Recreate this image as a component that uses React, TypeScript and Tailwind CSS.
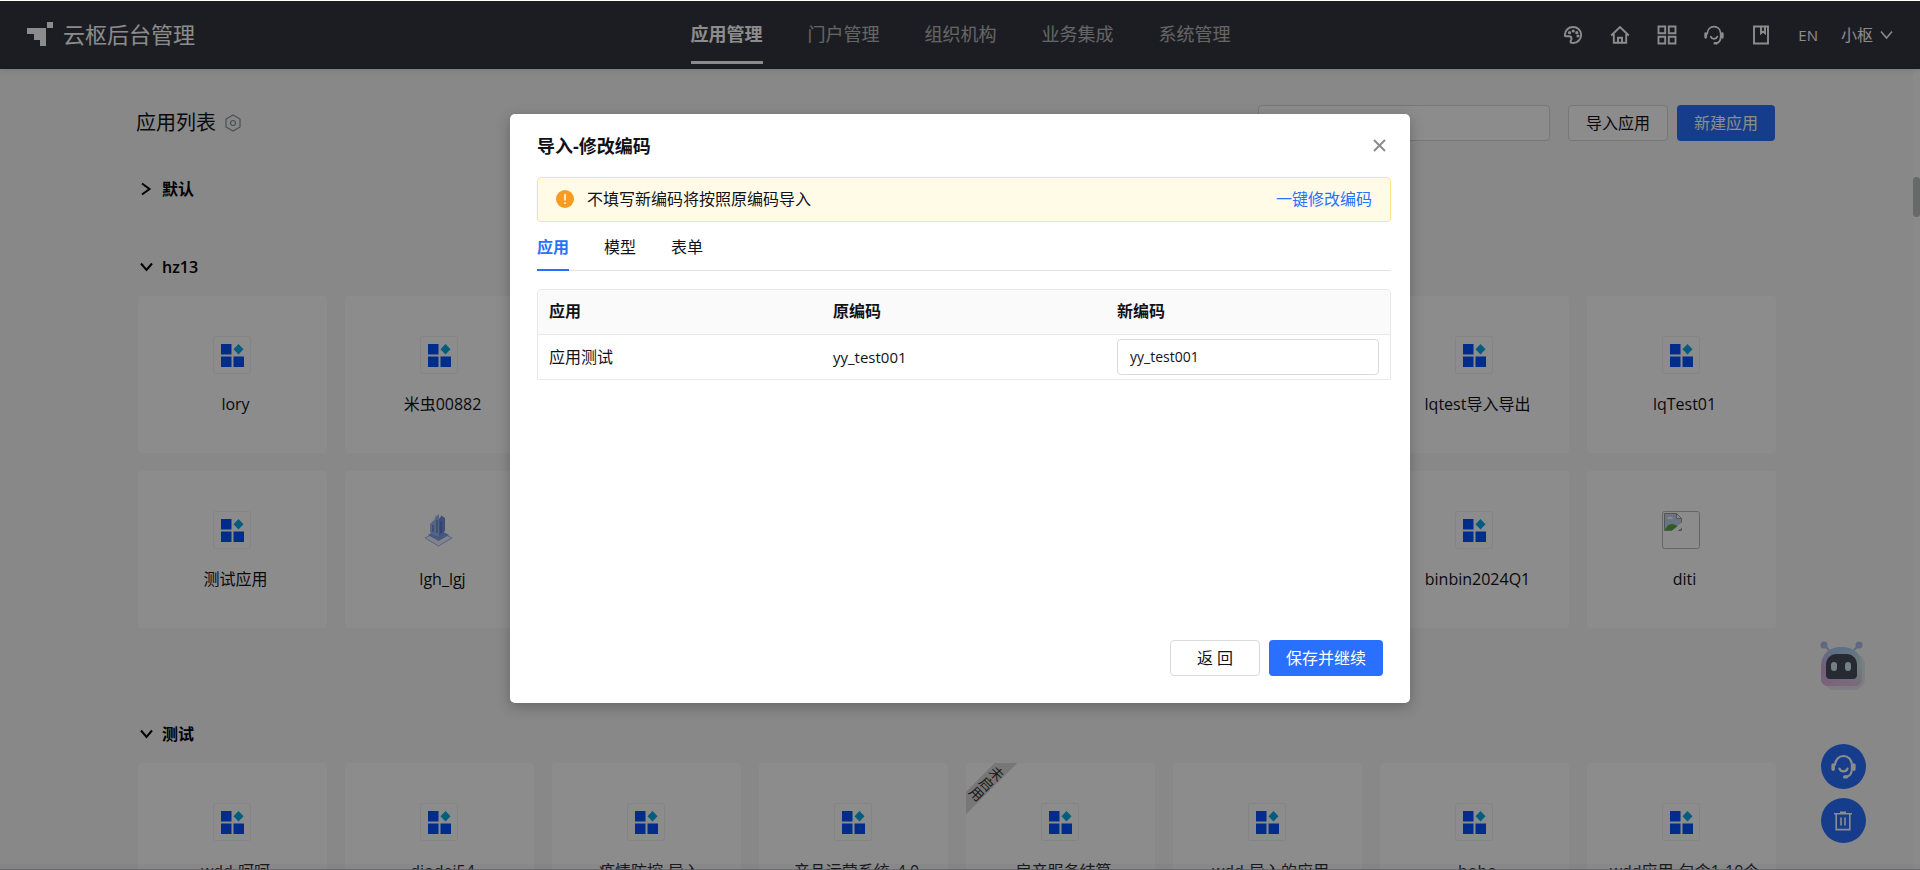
import React, { useState } from 'react';

interface AppItem {
  name: string;
  icon?: 'default' | 'tower' | 'broken';
  disabled?: boolean;
}

interface AppGroup {
  name: string;
  open: boolean;
  apps: AppItem[];
}

const NAV_ITEMS = ['应用管理', '门户管理', '组织机构', '业务集成', '系统管理'];

const TABS = ['应用', '模型', '表单'];

const GROUPS: AppGroup[] = [
  { name: '默认', open: false, apps: [] },
  {
    name: 'hz13',
    open: true,
    apps: [
      { name: 'lory' },
      { name: '米虫00882' },
      { name: '流程测试' },
      { name: '表单测试' },
      { name: '门户测试' },
      { name: '集成测试' },
      { name: 'lqtest导入导出' },
      { name: 'lqTest01' },
      { name: '测试应用' },
      { name: 'lgh_lgj', icon: 'tower' },
      { name: '模型测试' },
      { name: '报表测试' },
      { name: '权限测试' },
      { name: '数据测试' },
      { name: 'binbin2024Q1' },
      { name: 'diti', icon: 'broken' },
    ],
  },
  {
    name: '测试',
    open: true,
    apps: [
      { name: 'wdd-呵呵' },
      { name: 'diodei54' },
      { name: '疫情防控-导入' },
      { name: '产品运营系统_4.0' },
      { name: '房产服务结算', disabled: true },
      { name: 'wdd-导入的应用' },
      { name: 'bobo' },
      { name: 'wdd应用-包含1-10个' },
    ],
  },
];

const Logo = () => (
  <svg width="26" height="24" viewBox="0 0 26 24" fill="currentColor">
    <path d="M0 6h19v18h-6v-6H7v-6H0z" />
    <path d="M20 0h6v6h-6z" />
  </svg>
);

const PaletteIcon = () => (
  <svg width="20" height="20" viewBox="0 0 20 20" fill="none" stroke="currentColor" strokeWidth="1.9">
    <path d="M1.8 10C2 5.200 5.500 2 10 2s8.200 3.300 8.200 7.700S14.600 18 10.500 18c-2 0-3-.5-3-1.300 0-.9 1-1.500 1-2.900 0-1.600-1-2.500-2.500-2.500H2.600c-.5 0-.8-.5-.8-1.300z" />
    <g fill="currentColor" stroke="none">
      <circle cx="6.500" cy="7.700" r="1.600" />
      <circle cx="10.200" cy="6" r="1.600" />
      <circle cx="13.800" cy="7.700" r="1.600" />
      <circle cx="15" cy="11" r="1.600" />
    </g>
  </svg>
);

const HomeIcon = () => (
  <svg width="20" height="20" viewBox="0 0 20 20" fill="none" stroke="currentColor" strokeWidth="1.9">
    <path d="M1.200 10.500L10 2l8.800 8.500M3.800 9v8.700h12.400V9M8 17.500v-4.700h4v4.700" />
  </svg>
);

const GridIcon = () => (
  <svg width="20" height="20" viewBox="0 0 20 20" fill="none" stroke="currentColor" strokeWidth="1.9">
    <path d="M1.500 1.500h6.700v6.700H1.500zM11.800 1.500h6.700v6.700h-6.700zM1.500 11.800h6.700v6.700H1.500zM11.800 11.800h6.700v6.700h-6.700z" />
  </svg>
);

const HeadsetIcon = ({ size }: { size: number }) => (
  <svg width={size} height={size} viewBox="0 0 20 20" fill="none" stroke="currentColor" strokeWidth="1.700" strokeLinecap="round">
    <path d="M3.300 8.600C3.500 4.500 6.200 1.600 10 1.600s6.500 2.900 6.700 7v3.200c0 3.600-1.700 5.900-4.500 6.500" />
    <path d="M1.700 8.700v3.600M18.300 8.700v3.600" strokeWidth="2.800" />
    <path d="M10.800 18.300h1.600" strokeWidth="2.400" />
    <path d="M6.700 11.600c.6 1.500 1.800 2.300 3.300 2.300s2.700-.8 3.300-2.300" />
  </svg>
);

const BookIcon = () => (
  <svg width="20" height="20" viewBox="0 0 20 20" fill="none" stroke="currentColor" strokeWidth="1.9">
    <path d="M3 1.500h14v17H3zM10 2v6.200l2-1.600 2 1.600V2" />
  </svg>
);

const Chevron = ({ open, strokeWidth = 1.5 }: { open: boolean; strokeWidth?: number }) => (
  <svg width="14" height="14" viewBox="0 0 14 14" fill="none" stroke="currentColor" strokeWidth={strokeWidth}>
    <path d={open ? 'M1 3.500L6.500 10 12 3.500' : 'M2 1.500L9.500 7 2 12.500'} />
  </svg>
);

const TrashIcon = () => (
  <svg width="20" height="20" viewBox="0 0 20 20" fill="none" stroke="currentColor" strokeWidth="1.600">
    <path d="M1 2.700h18M7 1.300h6M3.200 3v15.600h13.600V3M8 6.500v8M12 6.500v8" />
  </svg>
);

const RobotIcon = () => (
  <svg width="46" height="50" viewBox="0 0 46 50">
    <defs>
      <linearGradient id="shell" x1="0" y1="0.700" x2="1" y2="0.400">
        <stop offset="0" stopColor="#d9a3dc" />
        <stop offset="0.500" stopColor="#c4cdea" />
        <stop offset="1" stopColor="#d3e8dc" />
      </linearGradient>
      <linearGradient id="shellTop" x1="0" y1="0" x2="0" y2="1">
        <stop offset="0" stopColor="#a9cdf2" />
        <stop offset="0.500" stopColor="#a9cdf2" stopOpacity="0" />
        <stop offset="1" stopColor="#efb9d6" stopOpacity="0.800" />
      </linearGradient>
    </defs>
    <rect x="3" y="12" width="42" height="37" rx="12" fill="#b9bfe0" opacity="0.300" />
    <g stroke="#a9c0e6" strokeWidth="2">
      <path d="M4 4l5 5M39 4l-5 5" />
    </g>
    <circle cx="4" cy="4" r="3.500" fill="#a9c0e6" />
    <circle cx="39" cy="4" r="3.500" fill="#a9c0e6" />
    <path d="M1 25C1 13 10 6 21.500 6S42 13 42 25v13c0 4-3 7-7 7H8c-4 0-7-3-7-7z" fill="url(#shell)" />
    <path d="M1 25C1 13 10 6 21.500 6S42 13 42 25v13c0 4-3 7-7 7H8c-4 0-7-3-7-7z" fill="url(#shellTop)" />
    <path d="M6 24c0-7 5-11 10-11h11c5 0 10 4 10 11v10c0 2-1 4-4 4H10c-3 0-4-2-4-4z" fill="#484b5e" />
    <rect x="11" y="21" width="6" height="9" rx="3" fill="#d3ecf0" />
    <rect x="25" y="21" width="6" height="9" rx="3" fill="#d3ecf0" />
  </svg>
);

const AppIcon = ({ type = 'default' }: { type?: AppItem['icon'] }) => {
  if (type === 'tower') {
    return (
      <svg width="38" height="38" viewBox="0 0 38 38">
        <path d="M5 27l13.500-7L32 27l-13.500 8z" fill="#eef1fa" stroke="#9db8f0" strokeWidth="1" />
        <path d="M8 24l10.500-6L29 24l-10.500 6z" fill="#7ea0ec" />
        <path d="M10 13l5-5v17l-5-4zM15 6l4-3v23l-4-2z" fill="#9db8ee" />
        <path d="M19 8l3-4v19l-3 2zM22 5l3 2v13l-3 2z" fill="#6d8fdc" />
        <path d="M13 14v7M17 9v13M21 10v12" stroke="#4a6cc4" strokeWidth="1" />
      </svg>
    );
  }
  if (type === 'broken') {
    return (
      <svg width="38" height="38" viewBox="0 0 38 38">
        <rect x="0.500" y="0.500" width="37" height="37" rx="2" fill="none" stroke="#b8b8b8" />
        <path d="M2.500 2.500h12l5 5v12h-17z" fill="#c3d4f2" stroke="#9a9a9a" />
        <path d="M14.500 2.500v5h5z" fill="#fff" stroke="#9a9a9a" />
        <path d="M5 8c1-3 5-3 6 0z" fill="#fff" />
        <path d="M3 19c3-8 10-8 16 0z" fill="#57a83a" />
        <path d="M9 20.500L20.500 11v5l-6 5z" fill="#fff" />
      </svg>
    );
  }
  return (
    <svg width="38" height="38" viewBox="0 0 38 38">
      <rect x="0.500" y="0.500" width="37" height="37" rx="2" fill="#fff" stroke="#f0f0f0" />
      <path d="M8 8h10.500v10.500H8zM8 20.500h10.500V31H8zM20.500 20.500H31V31H20.500z" fill="#0052ff" />
      <path d="M25.500 8l5 5.300-5 5.300-5-5.300z" fill="#00a9e8" />
    </svg>
  );
};

const AppCard = ({ app }: { app: AppItem }) => (
  <li className="relative flex h-[157px] flex-col items-center gap-[18px] overflow-hidden rounded bg-white pt-10">
    {app.disabled && (
      <span className="absolute -top-5 left-3 flex h-20 w-4 rotate-45 items-center justify-center bg-[#d9d9d9] text-sm leading-4 text-[#333] [writing-mode:vertical-rl]">
        未启用
      </span>
    )}
    <div className="pr-0.5">
      <AppIcon type={app.icon} />
    </div>
    <span className="max-w-full truncate pl-1.5 leading-6">{app.name}</span>
  </li>
);

const AppGroupSection = ({ group }: { group: AppGroup }) => (
  <section className="mb-[54px]">
    <button className="flex h-6 items-center gap-2 px-0.5 font-semibold text-black">
      <Chevron open={group.open} strokeWidth={2} />
      {group.name}
    </button>
    {group.open && (
      <ul className={`mt-[17px] grid grid-cols-8 gap-[18px] ${group.apps.length > 8 ? 'pb-10' : ''}`}>
        {group.apps.map((app) => (
          <AppCard key={app.name} app={app} />
        ))}
      </ul>
    )}
  </section>
);

const ImportDialog = ({ onClose }: { onClose: () => void }) => {
  const [activeTab, setActiveTab] = useState(TABS[0]);
  const [newCode, setNewCode] = useState('yy_test001');

  return (
    <div
      role="dialog"
      aria-labelledby="dialog-title"
      className="flex min-h-[589px] w-[900px] max-w-full flex-col rounded-[5px] bg-white text-[#111218] shadow-[0_4px_14px_rgba(0,0,0,0.25)]"
    >
      <div className="flex h-[63px] shrink-0 items-center justify-between pl-[27px] pr-6">
        <h2 id="dialog-title" className="text-lg font-bold">导入-修改编码</h2>
        <button aria-label="关闭" onClick={onClose} className="text-[#8c8c8c]">
          <svg width="13" height="13" viewBox="0 0 13 13" stroke="currentColor" strokeWidth="2">
            <path d="M1 1l11 11M12 1L1 12" />
          </svg>
        </button>
      </div>

      <div className="flex flex-1 flex-col pl-[27px] pr-[19px]">
        <div className="flex h-[45px] items-center rounded border border-[#ffe58f] bg-[#fffbe6] px-[18px] pb-0.5">
          <svg width="18" height="18" viewBox="0 0 18 18" className="mr-[13px]">
            <circle cx="9" cy="9" r="9" fill="#f79b22" />
            <path d="M9 4v6.500M9 12.200V14" stroke="#fff" strokeWidth="1.500" />
          </svg>
          <span className="flex-1">不填写新编码将按照原编码导入</span>
          <a href="#" className="text-[#2970ff]">一键修改编码</a>
        </div>

        <div role="tablist" className="flex h-[49px] gap-[35px] border-b border-[#e4e4e6]">
          {TABS.map((tab) => (
            <button
              key={tab}
              role="tab"
              aria-selected={tab === activeTab}
              onClick={() => setActiveTab(tab)}
              className={`-mb-px border-b-2 pt-0.5 ${
                tab === activeTab ? 'border-[#2970ff] font-bold text-[#2970ff]' : 'border-transparent'
              }`}
            >
              {tab}
            </button>
          ))}
        </div>

        <div className="mt-[18px] overflow-hidden rounded-t border border-[#e8e8e8]">
          <table className="w-full table-fixed text-left">
            <thead className="bg-[#fafafa]">
              <tr className="h-11 border-b border-[#e8e8e8]">
                <th className="px-[11px] pb-0.5 font-bold">应用</th>
                <th className="px-[11px] pb-0.5 font-bold">原编码</th>
                <th className="px-[11px] pb-0.5 font-bold">新编码</th>
              </tr>
            </thead>
            <tbody>
              <tr className="h-[45px]">
                <td className="px-[11px]">应用测试</td>
                <td className="px-[11px] text-[15px]">yy_test001</td>
                <td className="px-[11px]">
                  <input
                    aria-label="新编码"
                    value={newCode}
                    onChange={(e) => setNewCode(e.target.value)}
                    className="block h-9 w-full rounded-sm border border-[#d9d9d9] px-3 text-sm outline-none"
                  />
                </td>
              </tr>
            </tbody>
          </table>
        </div>
      </div>

      <div className="flex justify-end gap-[9px] p-[27px]">
        <button onClick={onClose} className="h-9 w-[90px] rounded-sm border border-[#d9d9d9]">返 回</button>
        <button className="h-9 rounded-sm bg-[#2970ff] px-[17px] text-white">保存并继续</button>
      </div>
    </div>
  );
};

const App: React.FC = () => {
  const [dialogOpen, setDialogOpen] = useState(true);

  return (
    <div className="relative flex h-screen flex-col overflow-hidden border-t border-white bg-[#f7f7f7] font-['Open_Sans','Noto_Sans_CJK_SC',sans-serif] text-base text-[#111218]">
      <header className="z-10 grid h-[68px] shrink-0 grid-cols-[1fr_auto_1fr] items-center bg-[#33353e] pl-[27px] pr-[26px] text-white shadow-[0_1px_6px_rgba(0,21,41,0.12)]">
        <div className="flex items-center gap-2.5 pb-0.5">
          <Logo />
          <span className="text-[22px] leading-8">云枢后台管理</span>
        </div>
        <nav className="flex h-[63px] gap-[45px] self-start pt-1.5 text-lg">
          {NAV_ITEMS.map((item, i) => (
            <a
              key={item}
              href="#"
              className={`flex items-center border-b-[3px] ${
                i === 0 ? 'border-white font-bold' : 'border-transparent text-white/65'
              }`}
            >
              {item}
            </a>
          ))}
        </nav>
        <div className="flex items-center justify-end gap-[23px]">
          <div className="flex items-center gap-[27px]">
            <button aria-label="主题"><PaletteIcon /></button>
            <button aria-label="首页"><HomeIcon /></button>
            <button aria-label="应用"><GridIcon /></button>
            <button aria-label="客服"><HeadsetIcon size={20} /></button>
            <button aria-label="文档"><BookIcon /></button>
            <button className="text-[15px]">EN</button>
          </div>
          <button className="flex items-center gap-[7px]">
            小枢 <Chevron open />
          </button>
        </div>
      </header>

      <main className="flex-1 overflow-hidden pl-[138px] pr-[144px] pt-9">
        <div className="-ml-0.5 mb-9 flex h-9 items-center pr-px">
          <h1 className="text-xl">应用列表</h1>
          <svg width="18" height="18" viewBox="0 0 18 18" fill="none" stroke="#8b8f99" strokeWidth="1.200" className="ml-2">
            <path d="M9 1l7 4v8l-7 4-7-4V5z" />
            <circle cx="9" cy="9" r="2.500" />
          </svg>
          <input aria-label="搜索应用" className="ml-auto h-9 w-[292px] rounded-sm border border-[#d9d9d9] bg-white px-3" />
          <button className="ml-[18px] h-9 rounded-sm border border-[#d9d9d9] bg-white px-[17px]" onClick={() => setDialogOpen(true)}>
            导入应用
          </button>
          <button className="ml-[9px] h-9 rounded-sm bg-[#2970ff] px-[17px] text-white">新建应用</button>
        </div>

        {GROUPS.map((group) => (
          <AppGroupSection key={group.name} group={group} />
        ))}
      </main>

      {/* Scrollbar */}
      <div className="absolute bottom-0 right-0 top-[68px] w-[7px] bg-[#fcfcfc]">
        <div className="mt-[108px] h-10 rounded-full bg-[#bcc1c0]" />
      </div>

      {/* Bottom edge shade */}
      <div className="absolute inset-x-0 bottom-0 h-1.5 border-b border-[#a3a3ad]/60 bg-[#c9cbe0]/15" />

      {/* Floating actions */}
      <div className="absolute bottom-[27px] right-[54px] flex flex-col items-center gap-[9px] text-white">
        <button aria-label="智能助手" className="mb-11"><RobotIcon /></button>
        <button aria-label="在线客服" className="flex size-[45px] items-center justify-center rounded-full bg-[#2970ff]">
          <HeadsetIcon size={25} />
        </button>
        <button aria-label="回收站" className="flex size-[45px] items-center justify-center rounded-full bg-[#2970ff]">
          <TrashIcon />
        </button>
      </div>

      {dialogOpen && (
        <div className="absolute inset-0 z-20 flex items-start justify-center bg-black/45 pt-[113px]">
          <ImportDialog onClose={() => setDialogOpen(false)} />
        </div>
      )}
    </div>
  );
};

export default App;
